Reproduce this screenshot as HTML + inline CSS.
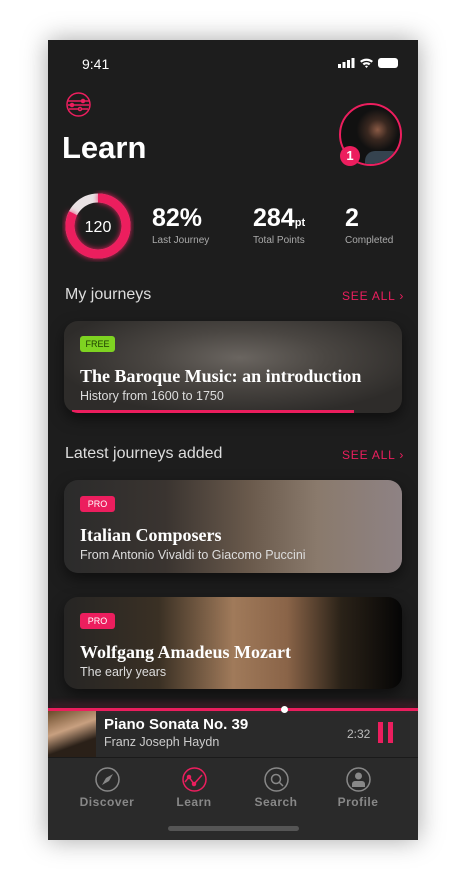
<!DOCTYPE html>
<html><head><meta charset="utf-8"><style>
*{margin:0;padding:0;box-sizing:border-box}
body{width:464px;height:896px;background:#fff;position:relative;overflow:hidden;font-family:"Liberation Sans",sans-serif}
.ph{position:absolute;left:48px;top:40px;width:370px;height:800px;background:#1d1d1d;box-shadow:0 0 24px rgba(0,0,0,.35);overflow:hidden}
.a{position:absolute}
.w{color:#fff}
.pk{color:#ec1e5e}
.card{position:absolute;left:16px;width:338px;border-radius:14px;overflow:hidden;box-shadow:0 6px 14px rgba(0,0,0,.5)}
.tag{position:absolute;left:16px;width:35px;height:16px;border-radius:3px;font-size:9px;text-align:center;line-height:16px}
.ct{position:absolute;left:16px;font-family:"Liberation Serif",serif;font-weight:bold;font-size:18px;color:#fff}
.cs{position:absolute;left:16px;font-size:12.5px;color:#ddd}
.nav{position:absolute;top:755px;width:80px;text-align:center;font-size:12px;font-weight:bold;letter-spacing:.5px;color:#888}
</style></head><body>
<div class="ph">
<div class="a w" style="left:34px;top:16px;font-size:14px">9:41</div>
<svg class="a" style="left:290px;top:17px" width="62" height="12" viewBox="0 0 62 12"><g fill="#fff"><rect x="0" y="7" width="3" height="4"/><rect x="4.5" y="5" width="3" height="6"/><rect x="9" y="3" width="3" height="8"/><rect x="13.5" y="1" width="3" height="10"/><path d="M22 4a10 10 0 0 1 13 0l-1.5 1.6a8 8 0 0 0-10 0zM24.5 6.6a6 6 0 0 1 8 0l-1.6 1.6a4 4 0 0 0-4.8 0zM27 9.2a2.5 2.5 0 0 1 3 0L28.5 11z"/><rect x="40" y="1" width="20" height="10" rx="3"/></g></svg>
<svg class="a" style="left:18px;top:52px" width="25" height="25" viewBox="0 0 25 25" fill="none" stroke="#ec1e5e" stroke-width="1.5"><circle cx="12.5" cy="12.5" r="11.5"/><path d="M2 9h21M2 13h21M3 17h19"/><circle cx="17" cy="9" r="1.5" fill="#ec1e5e"/><circle cx="6" cy="13" r="1.5" fill="#ec1e5e"/><circle cx="14" cy="17" r="1.5" fill="#1d1d1d"/></svg>
<div class="a w" style="left:14px;top:90px;font-size:31px;font-weight:bold;font-family:'Liberation Sans',sans-serif">Learn</div>
<div class="a" style="left:291px;top:63px;width:63px;height:63px;border-radius:50%;border:2px solid #ec1e5e;background:radial-gradient(circle at 62% 42%,#8a5a45 0,#3a2820 20%,#111 42%),#0d0d0d;overflow:hidden"><div style="position:absolute;left:24px;top:46px;width:36px;height:20px;background:#35434f;border-radius:10px 10px 0 0"></div></div>
<div class="a w" style="left:292px;top:106px;width:20px;height:20px;border-radius:50%;background:#ec1e5e;font-size:13px;font-weight:bold;text-align:center;line-height:20px">1</div>
<svg class="a" style="left:14px;top:150px" width="72" height="72" viewBox="0 0 72 72"><circle cx="36" cy="36" r="28" fill="none" stroke="#e9e2e4" stroke-width="9"/><circle cx="36" cy="36" r="28" fill="none" stroke="#ec1e5e" stroke-width="9" stroke-dasharray="145 176" transform="rotate(-90 36 36)" style="filter:drop-shadow(0 0 3px #ec1e5e)"/><text x="36" y="42" text-anchor="middle" fill="#fff" font-size="16" font-family="Liberation Sans">120</text></svg>
<div class="a w" style="left:104px;top:164px;font-size:25px;font-weight:bold">82%</div>
<div class="a" style="left:104px;top:195px;font-size:10px;color:#aaa">Last Journey</div>
<div class="a w" style="left:205px;top:164px;font-size:25px;font-weight:bold">284<span style="font-size:11px">pt</span></div>
<div class="a" style="left:205px;top:195px;font-size:10px;color:#aaa">Total Points</div>
<div class="a w" style="left:297px;top:164px;font-size:25px;font-weight:bold">2</div>
<div class="a" style="left:297px;top:195px;font-size:10px;color:#aaa">Completed</div>
<div class="a" style="left:17px;top:246px;font-size:16px;color:#ddd">My journeys</div>
<div class="a pk" style="left:294px;top:249px;font-size:12px;letter-spacing:.8px">SEE ALL ›</div>
<div class="card" style="top:281px;height:92px;background:radial-gradient(ellipse at 52% 40%,#6a6560 0,#4a4642 35%,#2e2c2a 75%),#333">
<div class="tag" style="top:15px;background:#7ed321;color:#1d3d00">FREE</div>
<div class="ct" style="top:45px">The Baroque Music: an introduction</div>
<div class="cs" style="top:68px">History from 1600 to 1750</div>
<div class="a" style="left:8px;bottom:0;width:282px;height:3px;background:#ec1e5e"></div></div>
<div class="a" style="left:17px;top:405px;font-size:16px;color:#ddd">Latest journeys added</div>
<div class="a pk" style="left:294px;top:408px;font-size:12px;letter-spacing:.8px">SEE ALL ›</div>
<div class="card" style="top:440px;height:93px;background:linear-gradient(90deg,#2b2b2b 0,#3a3430 30%,#6a5a4c 55%,#8a7a6c 75%,#8e8284 100%)">
<div class="tag" style="top:16px;background:#ec1e5e;color:#fff">PRO</div>
<div class="ct" style="top:45px">Italian Composers</div>
<div class="cs" style="top:68px">From Antonio Vivaldi to Giacomo Puccini</div></div>
<div class="card" style="top:557px;height:92px;background:linear-gradient(90deg,#262524 0,#3a3024 28%,#a07a5a 50%,#8a6448 66%,#2a2218 82%,#050505 100%)">
<div class="tag" style="top:16px;background:#ec1e5e;color:#fff">PRO</div>
<div class="ct" style="top:45px">Wolfgang Amadeus Mozart</div>
<div class="cs" style="top:68px">The early years</div></div>
<div class="a" style="left:0;top:670px;width:370px;height:130px;background:#2a2a2a"></div>
<div class="a" style="left:0;top:668px;width:370px;height:3px;background:#ec1e5e;box-shadow:0 -3px 8px rgba(236,30,94,.4)"></div>
<div class="a" style="left:233px;top:666px;width:7px;height:7px;border-radius:50%;background:#fff"></div>
<div class="a" style="left:0;top:671px;width:48px;height:46px;background:linear-gradient(160deg,#6a4a2a,#c8a080 40%,#2a2018 70%)"></div>
<div class="a w" style="left:56px;top:676px;font-size:15px;font-weight:bold">Piano Sonata No. 39</div>
<div class="a" style="left:56px;top:695px;font-size:12.5px;color:#ccc">Franz Joseph Haydn</div>
<div class="a" style="left:299px;top:687px;font-size:12px;color:#bbb">2:32</div>
<div class="a" style="left:330px;top:682px;width:5px;height:21px;background:#ec1e5e"></div>
<div class="a" style="left:340px;top:682px;width:5px;height:21px;background:#ec1e5e"></div>
<div class="a" style="left:0;top:717px;width:370px;height:1px;background:#1a1a1a"></div>
<svg class="a" style="left:47px;top:727px" width="25" height="25" viewBox="0 0 25 25"><circle cx="12.5" cy="12.5" r="11.5" fill="none" stroke="#888" stroke-width="1.5"/><path d="M18 7l-4 7-7 4 4-7z" fill="#888"/></svg>
<svg class="a" style="left:134px;top:727px" width="25" height="25" viewBox="0 0 25 25" fill="none" stroke="#ec1e5e" stroke-width="1.5"><circle cx="12.5" cy="12.5" r="11.5"/><path d="M3 15l4-5 5 7 8-9"/><circle cx="7" cy="10" r="1.5" fill="#ec1e5e"/><circle cx="12" cy="17" r="1.5" fill="#ec1e5e"/></svg>
<svg class="a" style="left:216px;top:727px" width="25" height="25" viewBox="0 0 25 25" fill="none" stroke="#888" stroke-width="1.5"><circle cx="12.5" cy="12.5" r="11.5"/><circle cx="12" cy="12" r="4.5"/><path d="M15 15l4 4"/></svg>
<svg class="a" style="left:298px;top:727px" width="25" height="25" viewBox="0 0 25 25"><circle cx="12.5" cy="12.5" r="11.5" fill="none" stroke="#888" stroke-width="1.5"/><circle cx="12.5" cy="9" r="3.5" fill="#888"/><path d="M6 20v-3a3 3 0 0 1 3-3h7a3 3 0 0 1 3 3v3z" fill="#888"/></svg>
<div class="nav" style="left:19px">Discover</div>
<div class="nav pk" style="left:106px">Learn</div>
<div class="nav" style="left:188px">Search</div>
<div class="nav" style="left:270px">Profile</div>
<div class="a" style="left:120px;top:786px;width:131px;height:5px;border-radius:3px;background:#555"></div>
</div>
</body></html>
